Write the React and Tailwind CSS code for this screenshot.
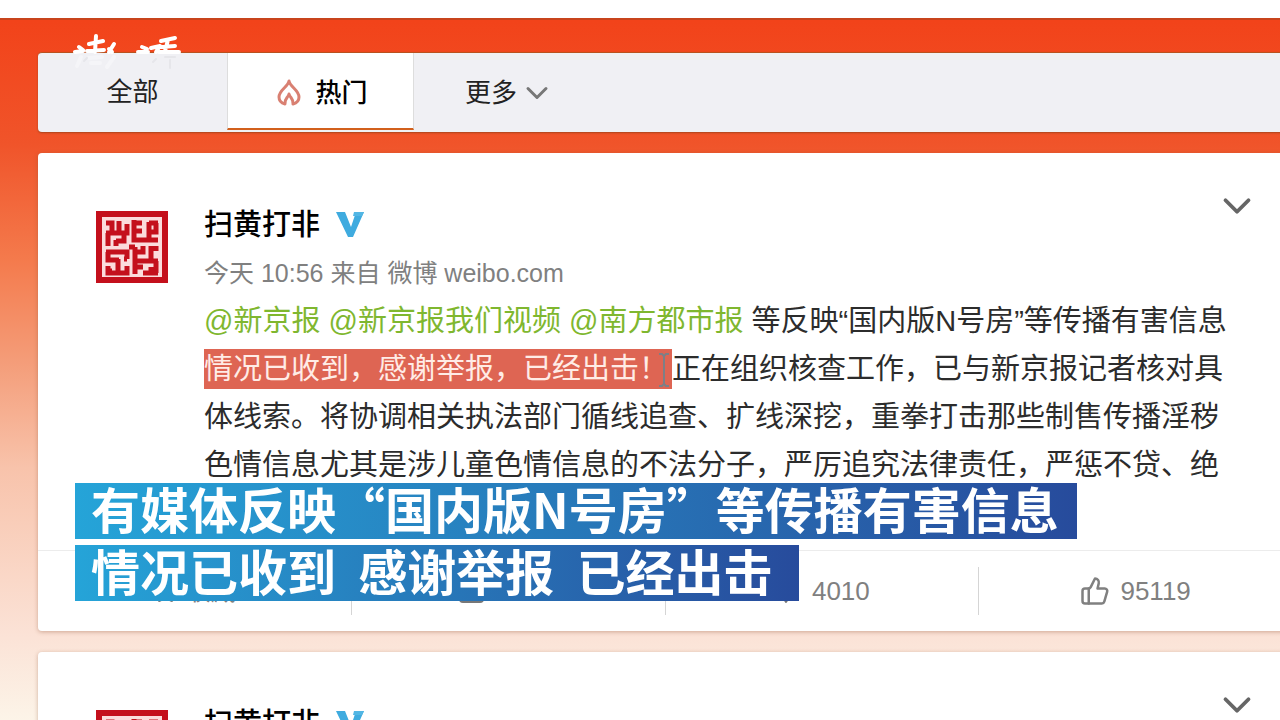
import React from 'react';
import { ChevronDown, Star, ThumbsUp } from 'lucide-react';

const bodyLines = [
  '体线索。将协调相关执法部门循线追查、扩线深挖，重拳打击那些制售传播淫秽',
  '色情信息尤其是涉儿童色情信息的不法分子，严厉追究法律责任，严惩不贷、绝',
];

const FlameIcon = () => (
  <svg width="24" height="28" viewBox="0 0 24 28" fill="none" stroke="#d98072" strokeWidth="3" strokeLinejoin="round" aria-hidden="true">
    <path d="M12 2C11 8 2 11 2 18c0 4 2 6 6 7-1-5 3-6 4-10 1 4 5 5 4 10 4-1 6-3 6-7 0-7-9-10-10-16Z" />
  </svg>
);

const VerifiedIcon = () => (
  <svg width="28" height="26" viewBox="0 0 28 26" aria-hidden="true">
    <path d="M0 0h9l6 15 5-15h8L17 25h-5Z" fill="#3fabdf" />
    <path d="M18 0h10l-2 4h-9Z" fill="#52b6e4" />
  </svg>
);

const SealAvatar = () => (
  <svg className="shrink-0" width="72" height="72" viewBox="0 0 72 72" role="img" aria-label="扫黄打非">
    <rect width="72" height="72" fill="#c4101c" />
    <rect x="6" y="6" width="60" height="60" fill="#fbdcdc" />
    <g fill="none" stroke="#c4101c" strokeWidth="5">
      <path d="M10 12h6v10M23 10v11M10 22h21v-9M12 22v13M20 29v6M28 22v8h-8" />
      <path d="M38 9v20h24M38 12h8M38 20h8M53 11v18M53 12h9M60 12v9h-8" />
      <path d="M10 41h21v7M12 41v8h11M12 55v7h19v-7M22 48v14M10 60h6M31 48h-3" />
      <path d="M39 36v27M39 41h8v-6M39 50h23M55 35v15M47 56h-8M60 40v-5M47 62h15M55 56v6M60 50v12" />
      <path d="M33 36h6" />
    </g>
  </svg>
);

const LogoMark = () => (
  <svg width="110" height="40" viewBox="0 0 110 40" fill="none" strokeLinecap="round" strokeLinejoin="round" aria-hidden="true">
    <g stroke="#fff" strokeWidth="4">
      <path d="m6 14 4 3M2 19l8-1M16 11l14-3M23 3l-1 16M14 18l17-1" />
      <path d="m41 11-5 8M36 16l3 3" />
      <path d="m69 14 5 2M65 19h10M78 15l9-2-4 6M88 8l14-3M95 7l-3 11M88 14l14-1M86 19h20" />
    </g>
    <g stroke="#f5f5f8" strokeWidth="4">
      <path d="m8 24-4 9M16 25l13-1M18 30h9M41 24l-7 10" />
    </g>
    <g stroke="#e6e6ea" strokeWidth="2">
      <path d="m14 25-3 3M83 26l-3 3M92 24h10M97 27v8" />
    </g>
  </svg>
);

const ShareIcon = () => (
  <svg width="28" height="28" viewBox="0 0 28 28" fill="none" stroke="#777" strokeWidth="2" strokeLinecap="round" strokeLinejoin="round" aria-hidden="true">
    <path d="M11 3H4a2 2 0 0 0-2 2v17a3 3 0 0 0 3 3h17a3 3 0 0 0 3-3v-7M10 14C11 8 16 6 24 6M20 2l5 4-5 4" />
  </svg>
);

const CommentIcon = () => (
  <svg width="22" height="26" viewBox="0 0 22 26" fill="none" stroke="#777" strokeWidth="2" strokeLinejoin="round" aria-hidden="true">
    <path d="M1 2h20v16h-5l-4 6-4-6H1Z" />
  </svg>
);

const Tabs = () => (
  <nav className="flex text-[26px] leading-8 text-[#222]">
    <div className="-mr-3 flex h-20 flex-1 rounded border-t border-[#b9521f] bg-[#f0f0f4] shadow-[0_1px_2px_#a8441c]">
      <button className="h-full w-[189px] pb-px">全部</button>
      <button className="flex h-[77px] w-[187px] items-center justify-center gap-3.5 border-x border-b-2 border-x-[#ddd] border-b-[#d2601c] bg-white pt-1 pl-1 font-medium text-black">
        <FlameIcon />
        热门
      </button>
      <button className="flex h-full items-center gap-0.5 pl-[51px]">
        更多
        <ChevronDown size={36} strokeWidth={2} color="#777" />
      </button>
    </div>
  </nav>
);

const PostHeader = () => (
  <div className="flex items-start justify-between">
    <div className="flex items-center gap-4">
      <a href="#profile" className="text-[29px] leading-9 font-medium text-black">扫黄打非</a>
      <VerifiedIcon />
    </div>
    <button className="-mt-6 mr-8 h-11" aria-label="菜单">
      <ChevronDown size={46} strokeWidth={2} color="#666" />
    </button>
  </div>
);

const TextCursor = () => (
  <svg className="absolute top-1 right-0.5" width="12" height="34" viewBox="0 0 12 34" fill="none" stroke="#7d7f86" strokeWidth="2" aria-hidden="true">
    <path d="M1 1h3l2 2 2-2h3M6 3v28M1 33h3l2-2 2 2h3" />
  </svg>
);

const Action = ({ children }) => (
  <li className="flex h-12 flex-1 items-center justify-center border-r border-[#d5d5d5] last:border-r-0">
    {children}
  </li>
);

const Post = () => (
  <article className="-mr-3 rounded bg-white shadow-[0_1px_4px_rgba(140,80,50,0.4)]">
    <div className="flex h-[397px] gap-9 overflow-hidden pt-[58px] pl-[58px]">
      <SealAvatar />
      <div className="-mt-1 min-w-0 flex-1">
        <PostHeader />
        <p className="mt-3.5 text-[25px] leading-8 text-[#808080]">今天 10:56 来自 微博 weibo.com</p>
        <div className="mt-2 text-[29px] leading-[48px] whitespace-nowrap text-[#2c2c2c]">
          <p>
            <a href="#a" className="text-[#7fb72f]">@新京报</a>{' '}
            <a href="#b" className="text-[#7fb72f]">@新京报我们视频</a>{' '}
            <a href="#c" className="text-[#7fb72f]">@南方都市报</a>{' '}
            等反映“国内版N号房”等传播有害信息
          </p>
          <p className="flex items-center">
            <mark className="relative flex h-10 w-[468px] items-center bg-[#de6553] text-[#ffece6]">
              情况已收到，感谢举报，已经出击！
              <TextCursor />
            </mark>
            正在组织核查工作，已与新京报记者核对具
          </p>
          {bodyLines.map((line) => (
            <p key={line}>{line}</p>
          ))}
        </div>
      </div>
    </div>
    <ul className="flex h-[81px] items-center border-t border-[#ececec] text-[26px] text-[#808080]">
      <Action>
        <button className="flex items-center gap-2 text-[25px] leading-8">
          <Star size={25} />
          收藏
        </button>
      </Action>
      <Action>
        <button className="w-[100px]" aria-label="转发">
          <ShareIcon />
        </button>
      </Action>
      <Action>
        <button className="flex items-center gap-4">
          <CommentIcon />
          4010
        </button>
      </Action>
      <Action>
        <button className="flex items-center gap-2.5">
          <ThumbsUp size={30} strokeWidth={2} />
          95119
        </button>
      </Action>
    </ul>
  </article>
);

const Caption = () => (
  <div className="absolute top-[483px] left-[75px] flex flex-col items-start gap-1.5 font-['Noto_Sans_CJK_SC',sans-serif] text-[49px] leading-[50px] font-bold whitespace-pre text-white">
    <p className="bg-linear-to-r from-[#25a4d8] via-[#2778b9] to-[#274b9c] pr-[18px] pb-1.5 pl-4">有媒体反映“国内版N号房”等传播有害信息</p>
    <p className="bg-linear-to-r from-[#25a4d8] via-[#2778b9] to-[#274b9c] pr-[26px] pb-1.5 pl-4">{'情况已收到  感谢举报  已经出击'}</p>
  </div>
);

export default function App() {
  return (
    <div
      lang="zh-CN"
      className="relative h-screen overflow-hidden bg-[linear-gradient(#f2431a_3%,#f0542a_20%,#f47a4c_36%,#f49c78_50%,#f8c3ab_65%,#fbe2d6_88%,#fcf4e8)] font-['Liberation_Sans','Noto_Sans_CJK_SC',sans-serif]"
    >
      <header className="h-5 border-b-2 border-[#c8441c] bg-white" />
      <main className="flex flex-col pt-8 pl-[38px]">
        <Tabs />
        <div className="mt-[21px] flex flex-col gap-[21px]">
          <Post />
          <Post />
        </div>
      </main>
      <div className="absolute top-[33px] left-[73px]"><LogoMark /></div>
      <Caption />
    </div>
  );
}
